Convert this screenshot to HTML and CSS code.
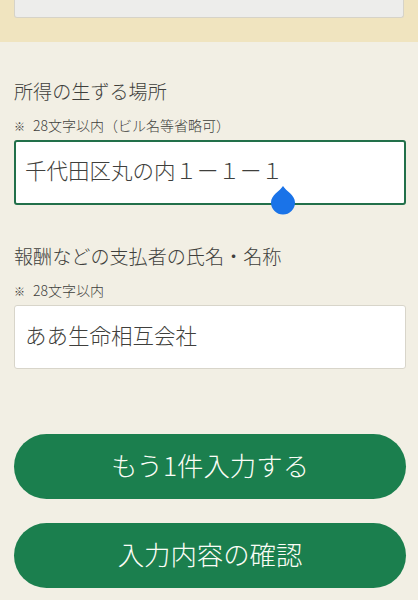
FILE: index.html
```html
<!DOCTYPE html>
<html lang="ja">
  <head>
    <meta charset="utf-8">
    <title>入力</title>
    <link rel="stylesheet" href="styles.css">
  </head>

  <body>
    <div class="top-band">
      <div class="disabled-field"></div>
    </div>

    <div class="container">
      <div class="form-group first">
        <div class="label">所得の生ずる場所</div>
        <div class="note"><span class="mark">※</span>28文字以内（ビル名等省略可）</div>
        <div class="field focused">
          千代田区丸の内１ー１ー１
          <svg class="handle" width="26" height="30" viewBox="0 0 26 30">
            <path d="M13 1C10 6 1 10 1 17.5a12 12 0 0 0 24 0C25 10 16 6 13 1Z" fill="#1a73e8"/>
          </svg>
        </div>
      </div>

      <div class="form-group second">
        <div class="label">報酬などの支払者の氏名・名称</div>
        <div class="note"><span class="mark">※</span>28文字以内</div>
        <div class="field">ああ生命相互会社</div>
      </div>

      <div class="buttons">
        <button type="button">もう1件入力する</button>
        <button type="button">入力内容の確認</button>
      </div>
    </div>
  </body>
</html>
```

FILE: styles.css
```css
html,
body {
  margin: 0;
  height: 600px;
  overflow: hidden;
}

body {
  background-color: #f2efe4;
  color: #3f3f3c;
  font-family: "Noto Sans CJK JP", "Noto Sans", sans-serif;
}

.top-band {
  height: 42px;
  padding: 0 14px;
  box-sizing: border-box;
  background-color: #f0e4bf;
}

.disabled-field {
  height: 18px;
  box-sizing: border-box;
  background-color: #ededeb;
  border: 1px solid #d6d3c8;
  border-top: none;
  border-radius: 0 0 3px 3px;
}

.container {
  padding: 0 12px 0 14px;
}

.form-group.first {
  padding-top: 35px;
}

.form-group.second {
  padding-top: 37px;
}

.label {
  font-size: 19.1px;
  font-weight: 300;
  line-height: 28px;
}

.note {
  height: 16px;
  margin-top: 12px;
  font-size: 14px;
  font-weight: 300;
  line-height: 16px;
  text-spacing-trim: space-all;
}

.mark {
  display: inline-block;
  width: 19px;
  font-size: 11px;
}

.field {
  position: relative;
  height: 64px;
  margin-top: 7px;
  padding: 0 10px 6px;
  box-sizing: border-box;
  display: flex;
  align-items: center;
  background-color: #fff;
  border: 1px solid #d8d5ca;
  border-radius: 3px;
  font-size: 21.5px;
  font-weight: 300;
}

.field.focused {
  height: 65px;
  padding: 0 9px 6px;
  border: 2px solid #22704a;
}

.handle {
  position: absolute;
  left: 254px;
  top: 43px;
}

.buttons {
  display: flex;
  flex-direction: column;
  gap: 24px;
  margin-top: 65px;
}

button {
  height: 65px;
  padding: 0 0 4px;
  background-color: #1b7f4e;
  color: #fbfdf6;
  border: none;
  border-radius: 33px;
  font-family: inherit;
  font-size: 26.4px;
  font-weight: 300;
}
```
